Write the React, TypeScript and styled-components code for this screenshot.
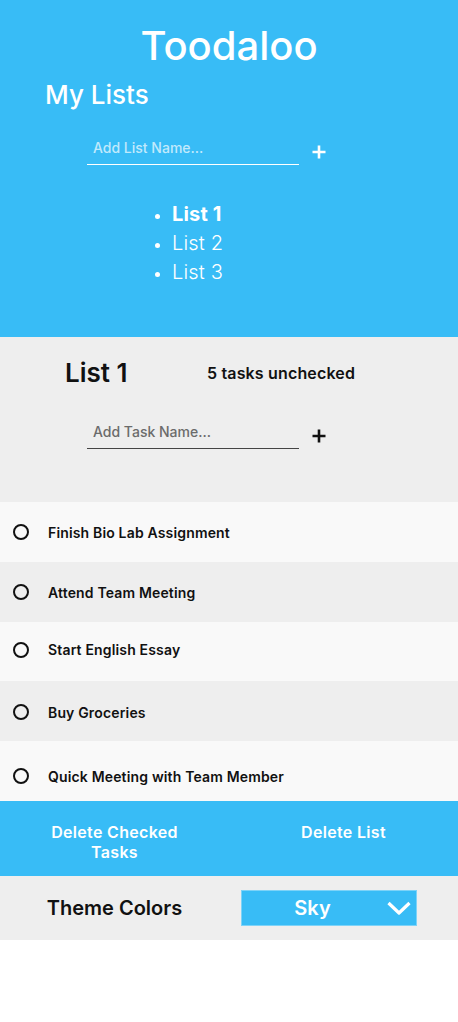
import React from "react";
import styled, { createGlobalStyle } from "styled-components";

const Global = createGlobalStyle`
  html, body { margin: 0; padding: 0; background: #ffffff; }
  body { font-family: Inter, "Noto Sans", sans-serif; letter-spacing: 0.01em; }
  * { box-sizing: border-box; }
`;

const SKY = "#38bcf6";

const Page = styled.div`
  width: 458px;
  display: flex;
  flex-direction: column;
`;

const Header = styled.header`
  background: ${SKY};
  height: 337px;
  display: flex;
  flex-direction: column;
  padding-top: 22px;
  color: #fff;
`;

const Title = styled.h1`
  margin: 0;
  font-size: 40px;
  font-weight: 500;
  text-align: center;
  line-height: 48px;
  letter-spacing: 0;
`;

const SubTitle = styled.h2`
  margin: 9px 0 0 45px;
  font-size: 26px;
  font-weight: 500;
  line-height: 32px;
  letter-spacing: 0;
`;

const InputRow = styled.div<{ $top: number }>`
  display: flex;
  align-items: flex-end;
  margin: ${(p) => p.$top}px 0 0 87px;
  gap: 12px;
`;

const TextInput = styled.input<{ $dark?: boolean }>`
  width: 212px;
  height: 30px;
  border: none;
  border-bottom: 1.5px solid ${(p) => (p.$dark ? "#444" : "#ffffff")};
  background: transparent;
  outline: none;
  padding: 0 6px 4px;
  font-family: Inter, sans-serif;
  font-size: 14px;
  font-weight: 500;
  color: ${(p) => (p.$dark ? "#222" : "#fff")};
  &::placeholder {
    color: ${(p) => (p.$dark ? "#6b6b6b" : "rgba(255,255,255,0.7)")};
  }
`;

const PlusButton = styled.button<{ $dark?: boolean }>`
  border: none;
  background: transparent;
  padding: 0;
  width: 16px;
  height: 16px;
  margin-bottom: 5px;
  display: flex;
  align-items: center;
  justify-content: center;
  color: ${(p) => (p.$dark ? "#111" : "#fff")};
`;

const Lists = styled.ul`
  margin: 35px 0 0 0;
  padding-left: 172px;
  list-style: disc;
  font-size: 20px;
  line-height: 29px;
`;

const ListItem = styled.li<{ $active?: boolean }>`
  font-weight: ${(p) => (p.$active ? 700 : 300)};
  &::marker { font-size: 16px; }
`;

const ListSection = styled.section`
  background: #eeeeee;
  height: 165px;
  padding-top: 20px;
  display: flex;
  flex-direction: column;
`;

const ListHead = styled.div`
  display: flex;
  align-items: center;
  padding-left: 65px;
`;

const ListName = styled.h3`
  margin: 0;
  width: 142px;
  font-size: 26px;
  font-weight: 600;
  line-height: 32px;
  color: #111;
  letter-spacing: 0;
`;

const Count = styled.span`
  font-size: 16px;
  font-weight: 600;
  color: #111;
`;

const TaskList = styled.div`
  display: flex;
  flex-direction: column;
`;

const TaskRow = styled.div<{ $alt?: boolean; $h: number; $shift: number }>`
  height: ${(p) => p.$h}px;
  background: ${(p) => (p.$alt ? "#eeeeee" : "#f9f9f9")};
  display: flex;
  align-items: center;
  padding-left: 13px;
  padding-top: ${(p) => Math.max(0, p.$shift * 2)}px;
  padding-bottom: ${(p) => Math.max(0, -p.$shift * 2)}px;
  gap: 19px;
`;

const Circle = styled.span`
  width: 16px;
  height: 16px;
  border: 2px solid #111;
  border-radius: 50%;
  flex-shrink: 0;
`;

const TaskText = styled.span`
  font-size: 14px;
  font-weight: 600;
  color: #111;
`;

const ActionBar = styled.div`
  background: ${SKY};
  height: 75px;
  display: grid;
  grid-template-columns: 1fr 1fr;
  padding-top: 21px;
`;

const ActionButton = styled.button`
  border: none;
  background: transparent;
  color: #fff;
  font-family: Inter, sans-serif;
  font-size: 16px;
  font-weight: 600;
  line-height: 20px;
  letter-spacing: 0.02em;
  text-align: center;
  align-self: start;
  padding: 0 40px;
`;

const ThemeBar = styled.div`
  background: #eeeeee;
  height: 64px;
  display: grid;
  grid-template-columns: 229px 1fr;
  align-items: center;
`;

const ThemeLabel = styled.span`
  font-size: 20px;
  font-weight: 600;
  color: #111;
  text-align: center;
  letter-spacing: 0;
`;

const Select = styled.div`
  margin-left: 12px;
  width: 176px;
  height: 36px;
  background: ${SKY};
  border: 1px solid #7dd3f8;
  display: flex;
  align-items: center;
  color: #fff;
  padding-right: 4px;
`;

const SelectValue = styled.span`
  flex: 1;
  text-align: center;
  font-size: 20px;
  font-weight: 600;
  padding-right: 3px;
`;

const Plus = ({ size = 16 }: { size?: number }) => (
  <svg width={size} height={size} viewBox="0 0 16 16">
    <path d="M8 1.5v13M1.5 8h13" stroke="currentColor" strokeWidth="2.6" />
  </svg>
);

const Chevron = () => (
  <svg width="26" height="18" viewBox="0 0 26 18">
    <path d="M2.5 4l10.5 10L23.5 4" stroke="#fff" strokeWidth="3.2" fill="none" strokeLinejoin="round" />
  </svg>
);

const tasks = [
  { text: "Finish Bio Lab Assignment", h: 60, shift: 0 },
  { text: "Attend Team Meeting", h: 60, shift: 0 },
  { text: "Start English Essay", h: 59, shift: -2 },
  { text: "Buy Groceries", h: 60, shift: 1 },
  { text: "Quick Meeting with Team Member", h: 60, shift: 5 },
];

export default function App() {
  return (
    <Page>
      <Global />
      <Header>
        <Title>Toodaloo</Title>
        <SubTitle>My Lists</SubTitle>
        <InputRow $top={24}>
          <TextInput placeholder="Add List Name..." />
          <PlusButton>
            <Plus />
          </PlusButton>
        </InputRow>
        <Lists>
          <ListItem $active>List 1</ListItem>
          <ListItem>List 2</ListItem>
          <ListItem>List 3</ListItem>
        </Lists>
      </Header>
      <ListSection>
        <ListHead>
          <ListName>List 1</ListName>
          <Count>5 tasks unchecked</Count>
        </ListHead>
        <InputRow $top={30}>
          <TextInput $dark placeholder="Add Task Name..." />
          <PlusButton $dark>
            <Plus />
          </PlusButton>
        </InputRow>
      </ListSection>
      <TaskList>
        {tasks.map((t, i) => (
          <TaskRow key={t.text} $alt={i % 2 === 1} $h={t.h} $shift={t.shift}>
            <Circle />
            <TaskText>{t.text}</TaskText>
          </TaskRow>
        ))}
      </TaskList>
      <ActionBar>
        <ActionButton>Delete Checked Tasks</ActionButton>
        <ActionButton>Delete List</ActionButton>
      </ActionBar>
      <ThemeBar>
        <ThemeLabel>Theme Colors</ThemeLabel>
        <Select>
          <SelectValue>Sky</SelectValue>
          <Chevron />
        </Select>
      </ThemeBar>
    </Page>
  );
}
